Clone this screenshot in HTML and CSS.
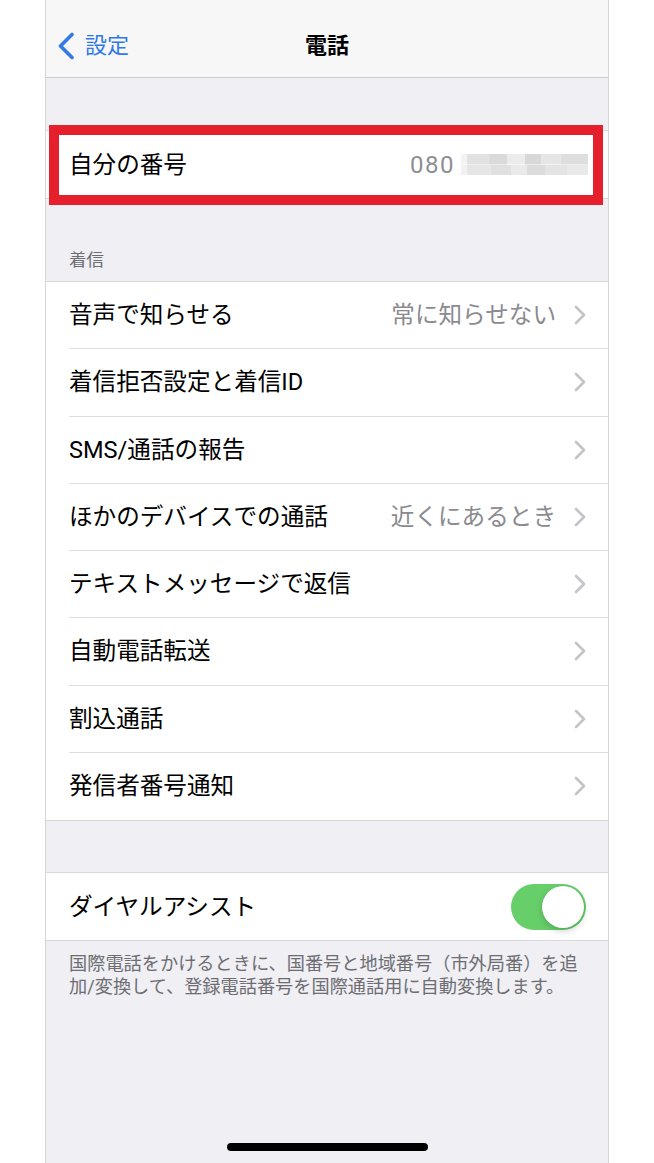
FILE: index.html
```html
<!DOCTYPE html>
<html lang="ja">
<head>
<meta charset="utf-8">
<title>電話</title>
<link rel="stylesheet" href="styles.css">
</head>
<body>
<div class="screen">
  <header class="nav">
    <div class="back">
      <svg class="back-chev" width="20" height="28" viewBox="0 0 20 28"><polyline points="16,2.5 4.5,14 16,25.5" fill="none" stroke="#3479e6" stroke-width="3.6" stroke-linecap="round" stroke-linejoin="round"/></svg>
      <span>設定</span>
    </div>
    <h1 class="title">電話</h1>
    <div></div>
  </header>

  <section class="group first">
    <div class="row">
      <div class="row-inner">
        <span class="label">自分の番号</span>
        <span class="number">080</span>
        <span class="blur"></span>
      </div>
    </div>
  </section>
  <div class="highlight"></div>

  <div class="section-header">着信</div>
  <section class="group list">
    <div class="row"><div class="row-inner"><span class="label">音声で知らせる</span><span class="value">常に知らせない</span><svg class="chev" width="12" height="20" viewBox="0 0 12 20"><polyline points="2,2 10,10 2,18" fill="none" stroke="#c4c4c8" stroke-width="2.6" stroke-linecap="round" stroke-linejoin="round"/></svg></div></div>
    <div class="row"><div class="row-inner"><span class="label">着信拒否設定と着信ID</span><svg class="chev" width="12" height="20" viewBox="0 0 12 20"><polyline points="2,2 10,10 2,18" fill="none" stroke="#c4c4c8" stroke-width="2.6" stroke-linecap="round" stroke-linejoin="round"/></svg></div></div>
    <div class="row"><div class="row-inner"><span class="label">SMS/通話の報告</span><svg class="chev" width="12" height="20" viewBox="0 0 12 20"><polyline points="2,2 10,10 2,18" fill="none" stroke="#c4c4c8" stroke-width="2.6" stroke-linecap="round" stroke-linejoin="round"/></svg></div></div>
    <div class="row"><div class="row-inner"><span class="label">ほかのデバイスでの通話</span><span class="value">近くにあるとき</span><svg class="chev" width="12" height="20" viewBox="0 0 12 20"><polyline points="2,2 10,10 2,18" fill="none" stroke="#c4c4c8" stroke-width="2.6" stroke-linecap="round" stroke-linejoin="round"/></svg></div></div>
    <div class="row"><div class="row-inner"><span class="label">テキストメッセージで返信</span><svg class="chev" width="12" height="20" viewBox="0 0 12 20"><polyline points="2,2 10,10 2,18" fill="none" stroke="#c4c4c8" stroke-width="2.6" stroke-linecap="round" stroke-linejoin="round"/></svg></div></div>
    <div class="row"><div class="row-inner"><span class="label">自動電話転送</span><svg class="chev" width="12" height="20" viewBox="0 0 12 20"><polyline points="2,2 10,10 2,18" fill="none" stroke="#c4c4c8" stroke-width="2.6" stroke-linecap="round" stroke-linejoin="round"/></svg></div></div>
    <div class="row"><div class="row-inner"><span class="label">割込通話</span><svg class="chev" width="12" height="20" viewBox="0 0 12 20"><polyline points="2,2 10,10 2,18" fill="none" stroke="#c4c4c8" stroke-width="2.6" stroke-linecap="round" stroke-linejoin="round"/></svg></div></div>
    <div class="row"><div class="row-inner"><span class="label">発信者番号通知</span><svg class="chev" width="12" height="20" viewBox="0 0 12 20"><polyline points="2,2 10,10 2,18" fill="none" stroke="#c4c4c8" stroke-width="2.6" stroke-linecap="round" stroke-linejoin="round"/></svg></div></div>
  </section>

  <section class="group assist">
    <div class="row">
      <div class="row-inner">
        <span class="label">ダイヤルアシスト</span>
        <span class="switch"><span class="knob"></span></span>
      </div>
    </div>
  </section>
  <p class="footer">国際電話をかけるときに、国番号と地域番号（市外局番）を追<br>加/変換して、登録電話番号を国際通話用に自動変換します。</p>

  <div class="home-indicator"></div>
</div>
</body>
</html>
```

FILE: styles.css
```css
html, body {
  margin: 0;
  padding: 0;
  background: #ffffff;
}

body {
  font-family: Roboto, "Noto Sans CJK JP", sans-serif;
  color: #000;
}

.screen {
  position: relative;
  margin-left: 45px;
  width: 564px;
  height: 1163px;
  box-sizing: border-box;
  border-left: 1px solid #d6d6d8;
  border-right: 1px solid #d6d6d8;
  background: #efeff4;
  overflow: hidden;
}

/* Navigation bar */
.nav {
  height: 78px;
  box-sizing: border-box;
  padding-top: 14px;
  background: #f7f7f8;
  border-bottom: 1px solid #cdcdd1;
  display: grid;
  grid-template-columns: 1fr auto 1fr;
  align-items: center;
}

.back {
  display: flex;
  align-items: center;
  gap: 9px;
  padding-left: 10px;
  color: #2f78e8;
  font-size: 22px;
  line-height: 28px;
}

.back-chev {
  display: block;
}

.title {
  margin: 0;
  font-size: 22px;
  font-weight: 700;
  line-height: 28px;
}

/* Groups */
.group {
  background: #fff;
  border-top: 1px solid #d8d8dc;
  border-bottom: 1px solid #d8d8dc;
}

.group.first {
  margin-top: 52px;
}

.row {
  padding-left: 23px;
}

.row-inner {
  height: 67.25px;
  box-sizing: border-box;
  display: flex;
  align-items: center;
  padding-right: 22px;
  border-bottom: 1px solid #dedee2;
  font-size: 23.6px;
  line-height: 30px;
}

.row:last-child .row-inner {
  border-bottom: none;
}

.first .row-inner,
.assist .row-inner {
  height: 67px;
}

.first .row-inner {
  padding-right: 20px;
}

.label {
  white-space: nowrap;
}

.value {
  margin-left: auto;
  margin-right: 18px;
  color: #8a8a8f;
  white-space: nowrap;
}

.chev {
  display: block;
  flex: none;
}

.label + .chev {
  margin-left: auto;
}

.number {
  margin-left: auto;
  color: #8e8e93;
  font-size: 24px;
  letter-spacing: 1.5px;
}

.blur {
  margin-left: 6px;
  width: 127px;
  height: 21px;
  background:
    linear-gradient(to right, #f3f3f3 0 6px, #e2e2e2 6px 28px, #dadada 28px 46px, #ececec 46px 64px, #d8d8d8 64px 80px, #e6e6e6 80px 100px, #dedede 100px 127px) top / 100% 50% no-repeat,
    linear-gradient(to right, #f1f1f1 0 6px, #e6e6e6 6px 30px, #e0e0e0 30px 50px, #eaeaea 50px 66px, #dcdcdc 66px 84px, #e4e4e4 84px 106px, #e9e9e9 106px 127px) bottom / 100% 50% no-repeat;
}

/* Red annotation box */
.highlight {
  position: absolute;
  top: 125px;
  left: 3px;
  width: 554px;
  height: 80px;
  box-sizing: border-box;
  border: 10px solid #e51f2b;
}

/* Section header */
.section-header {
  height: 82px;
  box-sizing: border-box;
  display: flex;
  align-items: flex-end;
  padding: 0 0 10px 23px;
  font-size: 17.5px;
  line-height: 22px;
  color: #6d6d72;
}

.group.assist {
  margin-top: 51px;
}

/* Switch */
.switch {
  margin-left: auto;
  width: 75px;
  height: 46px;
  box-sizing: border-box;
  padding: 2px;
  border-radius: 23px;
  background: #66cf6a;
  display: flex;
  justify-content: flex-end;
}

.knob {
  width: 42px;
  height: 42px;
  border-radius: 50%;
  background: #fff;
  box-shadow: 0 3px 7px rgba(0, 0, 0, 0.18), 0 0 0 0.5px rgba(0, 0, 0, 0.06);
}

/* Footer */
.footer {
  margin: 0;
  padding: 11px 20px 0 23px;
  font-size: 18.2px;
  line-height: 23px;
  color: #6d6d72;
  white-space: nowrap;
}

/* Home indicator */
.home-indicator {
  position: absolute;
  left: 181px;
  top: 1143px;
  width: 201px;
  height: 8px;
  border-radius: 4px;
  background: #000;
}
```
